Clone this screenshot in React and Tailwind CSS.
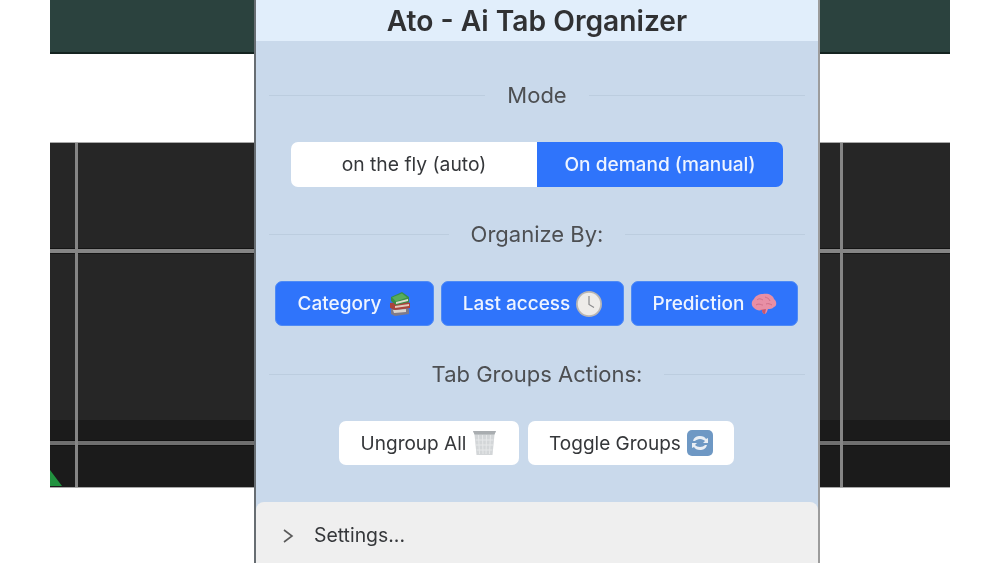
function BooksIcon() {
  return (
    <svg width="24" height="25" viewBox="0 0 24 25" className="shrink-0">
      <path d="M3 18l14-2 4 2v5l-14 2-4-2z" fill="#7f7a88" />
      <path d="M5 19l13-1v3L6 22z" fill="#d9d4cf" />
      <path d="M2 12l15-2 5 2v5L7 19l-5-2z" fill="#a9433c" />
      <path d="M7 15l14-2v2L7 17z" fill="#e4c9bb" />
      <path d="M3 6l11-5 7 5v5L8 14 3 10z" fill="#3a8f47" />
      <path d="M4 6.500L14 2.500l5 4L8 10.500z" fill="#58ad5c" />
      <path d="M8 11l12-3v2L8 13z" fill="#dcdccc" />
    </svg>
  );
}

function ClockIcon() {
  return (
    <svg width="26" height="26" viewBox="0 0 26 26" className="shrink-0">
      <circle cx="13" cy="13" r="13" fill="#b9b6b3" />
      <circle cx="13" cy="13" r="11.200" fill="#eeece9" />
      <path d="M13 5v8.500l5 3" fill="none" stroke="#8a8a8c" strokeWidth="1.200" />
    </svg>
  );
}

function BrainIcon() {
  return (
    <svg width="26" height="22" viewBox="0 0 26 22" className="shrink-0">
      <path
        d="M3 15C0 13 0 8 3 6c1-3 5-5 9-5 5-1 10 1 11 5 3 2 3 7 0 8-2 2-4 2-6 2-1 2-1 4-3 5-2 0-3-2-3-4-3 1-6 0-8-2z"
        fill="#e88fa5"
      />
      <path
        d="M6 7c2-2 4-1 6 0M14 4c2 1 4 1 5 4M5 12c3-2 5 0 7 0M15 11c2-1 4 0 6 1"
        fill="none"
        stroke="#cf6f88"
        strokeWidth="1"
      />
      <path d="M9 17c2 0 4-1 6-1l-1 5c-2 0-3-2-3-4z" fill="#c4566f" />
    </svg>
  );
}

function TrashIcon() {
  return (
    <svg width="25" height="26" viewBox="0 0 25 26" className="shrink-0">
      <path d="M1 1h23l-1.500 3.500L20.500 25h-16L2.500 4.500z" fill="#d3d6d8" />
      <path d="M1 1h23l-1.500 3.500h-20z" fill="#a9adb0" />
      <path
        d="M6.500 5l1 19M10.500 5l.5 19M14.500 5l-.5 19M18.500 5l-1 19M3.500 10h18M4 15h17M4.500 20h16"
        stroke="#e6e8e9"
        strokeWidth="1"
        fill="none"
      />
    </svg>
  );
}

function RefreshIcon() {
  return (
    <svg width="26" height="26" viewBox="0 0 26 26" className="shrink-0">
      <rect width="26" height="26" rx="5" fill="#6e98c4" />
      <path d="M6 11c1-4 4-5 7-5 3 0 5 1 6 3l2-1v5h-5l2-2c-1-1-3-2-5-2-2 0-4 1-5 2z" fill="#e9eef4" />
      <path d="M20 15c-1 4-4 5-7 5-3 0-5-1-6-3l-2 1v-5h5l-2 2c1 1 3 2 5 2 2 0 4-1 5-2z" fill="#e9eef4" />
    </svg>
  );
}

function SectionTitle({ children }) {
  return (
    <div className="flex h-[28px] w-full items-center gap-[22px] px-[13px]">
      <div className="h-px flex-1 bg-[#bccddf]" />
      <span className="text-[22px] text-[#4d4f52]">{children}</span>
      <div className="h-px flex-1 bg-[#bccddf]" />
    </div>
  );
}

function ActionButton({ width, label, icon, light }) {
  const color = light
    ? 'bg-white text-[#35373a] h-[44px]'
    : 'bg-[#2f74fb] text-[#eef4ff] h-[45px] border border-[#4f8bf5] font-medium';
  return (
    <button className={`flex items-center justify-center gap-[6px] rounded-[7px] text-[19px] ${color} ${width}`}>
      <span className="pt-[2px]">{label}</span>
      {icon}
    </button>
  );
}

function Backdrop({ line, width, triangle }) {
  return (
    <div className={`flex flex-col ${width}`}>
      <div className="h-[54px] border-b-2 border-[#142420] bg-[#2b423e]" />
      <div className="h-[88px] bg-white" />
      <div className="relative flex flex-col border-t border-[#a9a9a9]">
        <div className="h-[105px] bg-[#262626]" />
        <div className="h-[6px] border-y border-[#141414] bg-[#858585]" />
        <div className="h-[166px] bg-[#262626]" />
        <div className="h-[20px] bg-[#1b1b1b]" />
        <div className="h-[6px] border-y border-[#111111] bg-[#6f6f6f]" />
        <div className="h-[41px] bg-[#1b1b1b]" />
        <div className="h-px bg-[#a9a9a9]" />
        {/* vertical grid line runs over the rows */}
        <div className={`absolute top-0 bottom-[1px] w-[3px] bg-[#858585] ${line}`} />
        {triangle && (
          <svg width="13" height="17" viewBox="0 0 13 17" className="absolute bottom-[1px] left-0">
            <path d="M0 0L12 16H0z" fill="#21923f" />
          </svg>
        )}
      </div>
    </div>
  );
}

export default function App() {
  return (
    <div className="flex h-[563px] w-[1000px] overflow-hidden bg-white px-[50px] font-['Inter',sans-serif] blur-[0.7px]">
      <Backdrop width="w-[204px]" line="left-[25px]" triangle />

      <div className="flex h-[563px] w-[566px] flex-col border-r-2 border-l-2 border-r-[#9c9c9c] border-l-[#676d72] bg-[#c9d9eb]">
        <div className="flex h-[41px] items-center justify-center bg-[#e1eefb] pt-[1px] text-[28.2px] font-semibold text-[#303133]">
          Ato - Ai Tab Organizer
        </div>

        <div className="flex h-[461px] flex-col items-center pt-[40px]">
          <SectionTitle>Mode</SectionTitle>

          <div className="mt-[33px] flex h-[45px] w-[492px] overflow-hidden rounded-[7px] text-[19.3px]">
            <div className="flex flex-1 items-center justify-center bg-white text-[#35373a]">on the fly (auto)</div>
            <div className="flex flex-1 items-center justify-center bg-[#2f74fb] text-[19.1px] font-medium text-[#eef4ff]">On demand (manual)</div>
          </div>

          <div className="mt-[33px] w-full">
            <SectionTitle>Organize By:</SectionTitle>
          </div>

          <div className="mt-[33px] mr-px flex gap-[7px]">
            <ActionButton width="w-[159px]" label="Category" icon={<BooksIcon />} />
            <ActionButton width="w-[183px]" label="Last access" icon={<ClockIcon />} />
            <ActionButton width="w-[167px]" label="Prediction" icon={<BrainIcon />} />
          </div>

          <div className="mt-[34px] w-full">
            <SectionTitle>Tab Groups Actions:</SectionTitle>
          </div>

          <div className="mt-[33px] mr-px flex gap-[9px]">
            <ActionButton light width="w-[180px]" label="Ungroup All" icon={<TrashIcon />} />
            <ActionButton light width="w-[206px]" label="Toggle Groups" icon={<RefreshIcon />} />
          </div>
        </div>

        <div className="flex flex-1 items-center gap-[20px] rounded-t-[8px] bg-[#efefef] pt-[6px] pl-[26px] text-[19.4px] text-[#35373a]">
          <svg width="12" height="16" viewBox="0 0 12 16">
            <path d="M2 2l8 6-8 6" fill="none" stroke="#5a5a5a" strokeWidth="1.600" />
          </svg>
          Settings...
        </div>
      </div>

      <Backdrop width="w-[130px]" line="left-[20px]" />
    </div>
  );
}
